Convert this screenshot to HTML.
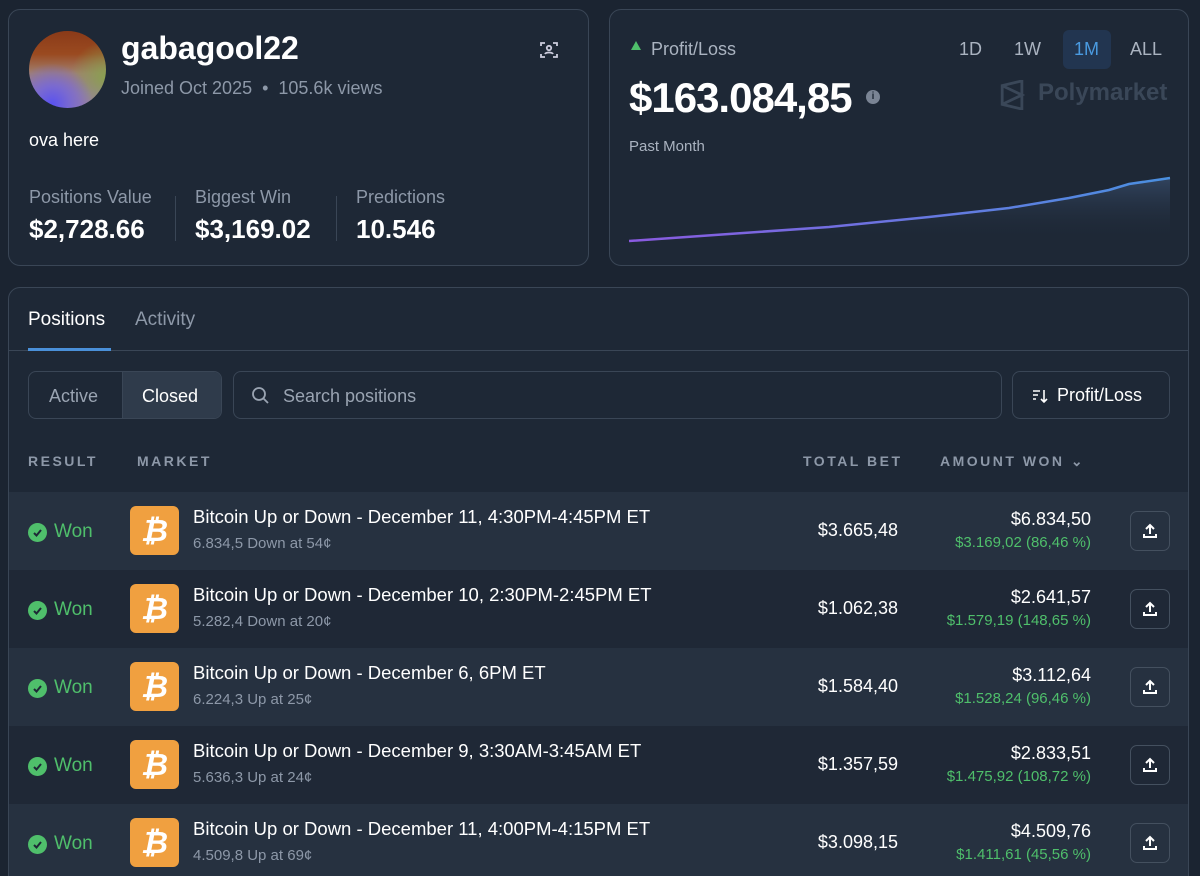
<!DOCTYPE html>
<html><head><meta charset="utf-8"><style>
*{box-sizing:border-box;margin:0;padding:0}
html,body{width:1200px;height:876px;overflow:hidden}
body{background:#1b2431;font-family:"Liberation Sans",sans-serif;color:#fff;position:relative}
.card{position:absolute;border:1px solid #3a4656;border-radius:12px;background:#1e2836}
.abs{position:absolute;white-space:nowrap}
.gray{color:#8d98a8}
.row{position:absolute;left:9px;width:1179px;height:78px}
.row.l{background:#263140}
.row.d{background:#1f2836}
.won{position:absolute;left:19px;top:29px;color:#4fbf6b;font-size:19px;display:flex;align-items:center;gap:7px}
.chk{width:19px;height:19px;border-radius:50%;background:#4fbf6b;display:flex;align-items:center;justify-content:center}
.btc{position:absolute;left:121px;top:14px;width:49px;height:49px;border-radius:6px;background:#f0a040;color:#fff;font-size:31px;font-weight:bold;text-align:center;line-height:49px;font-style:italic}
.t{position:absolute;left:184px;top:14px;font-size:18.5px;color:#fff}
.s{position:absolute;left:184px;top:43px;font-size:15px;color:#8d98a8}
.bet{position:absolute;right:290px;top:28px;font-size:18px}
.amt{position:absolute;right:97px;top:17px;font-size:18px;text-align:right}
.pct{position:absolute;right:97px;top:42px;font-size:15px;color:#4fbf6b}
.sh{position:absolute;left:1121px;top:19px;width:40px;height:40px;border:1px solid #44505f;border-radius:7px;display:flex;align-items:center;justify-content:center}
</style></head><body>
<div class="card" style="left:8px;top:9px;width:581px;height:257px">
 <div class="abs" style="left:20px;top:21px;width:77px;height:77px;border-radius:50%;background:radial-gradient(circle at 30% 95%,#5a52f0 0,#7a6ad0 20%,transparent 45%),radial-gradient(circle at 100% 60%,#8aa050 0,transparent 40%),linear-gradient(180deg,#8a3a18 0%,#9a4a20 30%,#a08070 55%,#9a80a0 80%)"></div>
 <div class="abs" style="left:112px;top:20px;font-size:32px;font-weight:bold">gabagool22</div>
 <div class="abs gray" style="left:112px;top:68px;font-size:18px">Joined Oct 2025 &nbsp;•&nbsp; 105.6k views</div>
 <svg class="abs" style="left:530px;top:30px" width="20" height="20" viewBox="0 0 20 20" fill="none" stroke="#ccd" stroke-width="1.8"><path d="M2 6V3h4M14 3h4v3M18 14v3h-4M6 17H2v-3"/><circle cx="10" cy="8" r="2.2"/><path d="M6 14c1-2 7-2 8 0"/></svg>
 <div class="abs" style="left:20px;top:120px;font-size:18px">ova here</div>
 <div class="abs gray" style="left:20px;top:177px;font-size:18px">Positions Value</div>
 <div class="abs" style="left:20px;top:204px;font-size:26px;font-weight:bold">$2,728.66</div>
 <div class="abs" style="left:166px;top:186px;width:1px;height:45px;background:#3a4656"></div>
 <div class="abs gray" style="left:186px;top:177px;font-size:18px">Biggest Win</div>
 <div class="abs" style="left:186px;top:204px;font-size:26px;font-weight:bold">$3,169.02</div>
 <div class="abs" style="left:327px;top:186px;width:1px;height:45px;background:#3a4656"></div>
 <div class="abs gray" style="left:347px;top:177px;font-size:18px">Predictions</div>
 <div class="abs" style="left:347px;top:204px;font-size:26px;font-weight:bold">10.546</div>
</div>
<div class="card" style="left:609px;top:9px;width:580px;height:257px">
 <div class="abs" style="left:21px;top:31px;width:0;height:0;border-left:5px solid transparent;border-right:5px solid transparent;border-bottom:9px solid #4fbf6b"></div>
 <div class="abs gray" style="left:41px;top:29px;font-size:18px;color:#aab3c0">Profit/Loss</div>
 <div class="abs" style="left:349px;top:29px;font-size:18px;color:#aab3c0">1D</div>
 <div class="abs" style="left:404px;top:29px;font-size:18px;color:#aab3c0">1W</div>
 <div class="abs" style="left:453px;top:20px;width:48px;height:39px;border-radius:6px;background:#223550"></div>
 <div class="abs" style="left:464px;top:29px;font-size:18px;color:#4a9ae0">1M</div>
 <div class="abs" style="left:520px;top:29px;font-size:18px;color:#aab3c0">ALL</div>
 <div class="abs" style="left:19px;top:64px;font-size:42px;font-weight:bold;letter-spacing:-1px">$163.084,85</div>
 <div class="abs" style="left:256px;top:80px;width:14px;height:14px;border-radius:50%;background:#7a8494;color:#1e2836;font-size:10px;font-weight:bold;text-align:center;line-height:14px">i</div>
 <svg class="abs" style="left:390px;top:70px" width="25" height="30" viewBox="0 0 26 32" fill="none" stroke="#3a4758" stroke-width="3"><path d="M2 6L23 1V31L2 26Z M2 6L23 16L2 26"/></svg>
 <div class="abs" style="left:428px;top:69px;font-size:24px;font-weight:bold;color:#3a4758">Polymarket</div>
 <div class="abs" style="left:19px;top:128px;font-size:15px;color:#aab3c0">Past Month</div>
 <svg class="abs" style="left:19px;top:165px" width="542" height="75" viewBox="0 0 542 75">
  <defs><linearGradient id="lg" x1="0" x2="1"><stop offset="0" stop-color="#8a5ae0"/><stop offset="1" stop-color="#4a90e0"/></linearGradient>
  <linearGradient id="fg" x1="0" y1="0" x2="0" y2="1"><stop offset="0" stop-color="#3a5070" stop-opacity=".7"/><stop offset="1" stop-color="#1e2836" stop-opacity="0"/></linearGradient></defs>
  <path d="M0 66L100 59L200 52L300 42L380 33L440 23L480 15L500 9L541 3V65H0Z" fill="url(#fg)"/>
  <path d="M0 66L100 59L200 52L300 42L380 33L440 23L480 15L500 9L541 3" fill="none" stroke="url(#lg)" stroke-width="2.5"/>
 </svg>
</div>
<div class="card" style="left:8px;top:287px;width:1181px;height:620px;overflow:hidden">
 <div class="abs" style="left:19px;top:21px;font-size:19px">Positions</div>
 <div class="abs" style="left:126px;top:21px;font-size:19px;color:#8d98a8">Activity</div>
 <div class="abs" style="left:0;top:62px;width:1181px;height:1px;background:#3a4656"></div>
 <div class="abs" style="left:19px;top:60px;width:83px;height:3px;background:#4a90d9"></div>
 <div class="abs" style="left:19px;top:83px;width:194px;height:48px;border:1px solid #3a4656;border-radius:8px;overflow:hidden">
  <div class="abs" style="left:93px;top:0;width:101px;height:48px;background:#2f3b4b;border-left:1px solid #3a4656"></div>
  <div class="abs" style="left:20px;top:14px;font-size:18px;color:#9aa4b2">Active</div>
  <div class="abs" style="left:113px;top:14px;font-size:18px">Closed</div>
 </div>
 <div class="abs" style="left:224px;top:83px;width:769px;height:48px;border:1px solid #3a4656;border-radius:8px">
  <svg class="abs" style="left:17px;top:14px" width="20" height="20" viewBox="0 0 20 20" fill="none" stroke="#9aa4b2" stroke-width="1.8"><circle cx="8" cy="8" r="6"/><path d="M12.5 12.5L17 17"/></svg>
  <div class="abs" style="left:49px;top:14px;font-size:18px;color:#9aa4b2">Search positions</div>
 </div>
 <div class="abs" style="left:1003px;top:83px;width:158px;height:48px;border:1px solid #3a4656;border-radius:8px">
  <svg class="abs" style="left:19px;top:16px" width="16" height="16" viewBox="0 0 16 16" fill="none" stroke="#fff" stroke-width="1.6"><path d="M1 3h7M1 7h5M1 11h3M12 2v12M9 11l3 3 3-3"/></svg>
  <div class="abs" style="left:44px;top:13px;font-size:18px">Profit/Loss</div>
 </div>
 <div class="abs gray" style="left:19px;top:165px;font-size:14px;letter-spacing:2.5px;font-weight:bold">RESULT</div>
 <div class="abs gray" style="left:128px;top:165px;font-size:14px;letter-spacing:2.5px;font-weight:bold">MARKET</div>
 <div class="abs gray" style="left:794px;top:165px;font-size:14px;letter-spacing:2.5px;font-weight:bold">TOTAL BET</div>
 <div class="abs gray" style="left:931px;top:165px;font-size:14px;letter-spacing:2.5px;font-weight:bold">AMOUNT WON ⌄</div>
</div>
<div class="row l" style="top:492px"><div class="won"><span class="chk"><svg width="11" height="11" viewBox="0 0 11 11"><path d="M2 6l2.5 2.5L9 3" stroke="#1e2836" stroke-width="2" fill="none"/></svg></span>Won</div><div class="btc">₿</div><div class="t">Bitcoin Up or Down - December 11, 4:30PM-4:45PM ET</div><div class="s">6.834,5 Down at 54¢</div><div class="bet">$3.665,48</div><div class="amt">$6.834,50</div><div class="pct">$3.169,02 (86,46 %)</div><div class="sh"><svg width="18" height="18" viewBox="0 0 18 18" fill="none" stroke="#fff" stroke-width="2"><path d="M9 12V3M5 7l4-4 4 4M3 12v3h12v-3"/></svg></div></div>
<div class="row d" style="top:570px"><div class="won"><span class="chk"><svg width="11" height="11" viewBox="0 0 11 11"><path d="M2 6l2.5 2.5L9 3" stroke="#1e2836" stroke-width="2" fill="none"/></svg></span>Won</div><div class="btc">₿</div><div class="t">Bitcoin Up or Down - December 10, 2:30PM-2:45PM ET</div><div class="s">5.282,4 Down at 20¢</div><div class="bet">$1.062,38</div><div class="amt">$2.641,57</div><div class="pct">$1.579,19 (148,65 %)</div><div class="sh"><svg width="18" height="18" viewBox="0 0 18 18" fill="none" stroke="#fff" stroke-width="2"><path d="M9 12V3M5 7l4-4 4 4M3 12v3h12v-3"/></svg></div></div>
<div class="row l" style="top:648px"><div class="won"><span class="chk"><svg width="11" height="11" viewBox="0 0 11 11"><path d="M2 6l2.5 2.5L9 3" stroke="#1e2836" stroke-width="2" fill="none"/></svg></span>Won</div><div class="btc">₿</div><div class="t">Bitcoin Up or Down - December 6, 6PM ET</div><div class="s">6.224,3 Up at 25¢</div><div class="bet">$1.584,40</div><div class="amt">$3.112,64</div><div class="pct">$1.528,24 (96,46 %)</div><div class="sh"><svg width="18" height="18" viewBox="0 0 18 18" fill="none" stroke="#fff" stroke-width="2"><path d="M9 12V3M5 7l4-4 4 4M3 12v3h12v-3"/></svg></div></div>
<div class="row d" style="top:726px"><div class="won"><span class="chk"><svg width="11" height="11" viewBox="0 0 11 11"><path d="M2 6l2.5 2.5L9 3" stroke="#1e2836" stroke-width="2" fill="none"/></svg></span>Won</div><div class="btc">₿</div><div class="t">Bitcoin Up or Down - December 9, 3:30AM-3:45AM ET</div><div class="s">5.636,3 Up at 24¢</div><div class="bet">$1.357,59</div><div class="amt">$2.833,51</div><div class="pct">$1.475,92 (108,72 %)</div><div class="sh"><svg width="18" height="18" viewBox="0 0 18 18" fill="none" stroke="#fff" stroke-width="2"><path d="M9 12V3M5 7l4-4 4 4M3 12v3h12v-3"/></svg></div></div>
<div class="row l" style="top:804px"><div class="won"><span class="chk"><svg width="11" height="11" viewBox="0 0 11 11"><path d="M2 6l2.5 2.5L9 3" stroke="#1e2836" stroke-width="2" fill="none"/></svg></span>Won</div><div class="btc">₿</div><div class="t">Bitcoin Up or Down - December 11, 4:00PM-4:15PM ET</div><div class="s">4.509,8 Up at 69¢</div><div class="bet">$3.098,15</div><div class="amt">$4.509,76</div><div class="pct">$1.411,61 (45,56 %)</div><div class="sh"><svg width="18" height="18" viewBox="0 0 18 18" fill="none" stroke="#fff" stroke-width="2"><path d="M9 12V3M5 7l4-4 4 4M3 12v3h12v-3"/></svg></div></div>
</body></html>
